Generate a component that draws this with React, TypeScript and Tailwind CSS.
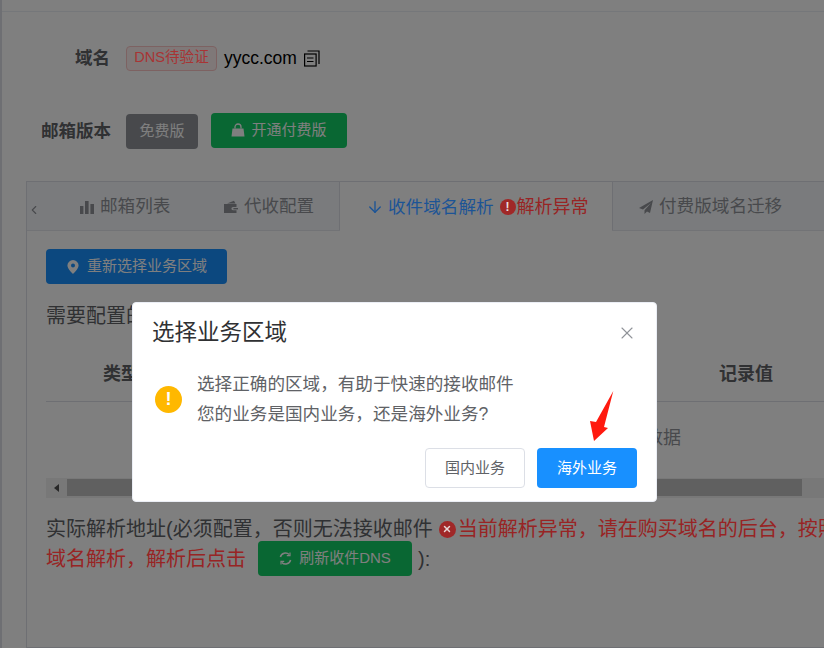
import React from "react";
import { X, ArrowDown, ChevronLeft } from "lucide-react";

const F = "[font-family:'Liberation_Sans','Noto_Sans_CJK_SC',sans-serif]";

function CopyIcon() {
  return (
    <svg width="16" height="17" viewBox="0 0 16 17" fill="none" stroke="currentColor" strokeWidth="1.2" className="ml-[7px]">
      <path d="M3.5 1 H15 V14" />
      <rect x="0.6" y="4" width="11.5" height="12" />
      <path d="M3 8 H9.5 M3 11.5 H9.5" />
    </svg>
  );
}
function Bag() {
  return (
    <svg width="14" height="14" viewBox="0 0 14 14" fill="currentColor">
      <path d="M1.5 5.5 H12.5 L13.5 13.5 H0.5 Z" />
      <path d="M4 5.5 V4 A3 3 0 0 1 10 4 V5.5" fill="none" stroke="currentColor" strokeWidth="1.3" />
    </svg>
  );
}
function Bars() {
  return (
    <svg width="14" height="14" viewBox="0 0 14 14" fill="currentColor" className="mr-[6px]">
      <rect x="0" y="6" width="3.4" height="8" />
      <rect x="5" y="1" width="3.6" height="13" />
      <rect x="10.4" y="4" width="3.6" height="10" />
    </svg>
  );
}
function WalletIcon() {
  return (
    <svg width="14" height="14" viewBox="0 0 14 14" className="mr-[6px]">
      <path fill="currentColor" d="M3 3.5 L10 0.8 L11.5 3.5 Z" />
      <path fill="currentColor" fillRule="evenodd" d="M0 4 H12.5 V7 H9 A1.6 1.6 0 0 0 9 10.2 H12.5 V13 H0 Z" />
      <rect x="9.4" y="8" width="4.6" height="1.4" fill="currentColor" />
    </svg>
  );
}
function Plane() {
  return (
    <svg width="14" height="14" viewBox="0 0 14 14" fill="currentColor" className="mr-[6px]">
      <path d="M14 0 L0 8 L4 9.5 L12 3 L5.5 10.2 L5.5 14 L8 11.4 L11 13 Z" />
    </svg>
  );
}
function Pin() {
  return (
    <svg width="12" height="14" viewBox="0 0 12 14">
      <path fill="currentColor" fillRule="evenodd" d="M6 0 A5.6 5.6 0 0 1 11.6 5.6 C11.6 9 6 14 6 14 C6 14 0.4 9 0.4 5.6 A5.6 5.6 0 0 1 6 0 Z M6 3.6 A2 2 0 1 0 6 7.6 A2 2 0 1 0 6 3.6 Z" />
    </svg>
  );
}
function Refresh() {
  return (
    <svg width="13" height="13" viewBox="0 0 13 13" fill="none" stroke="currentColor" strokeWidth="1.5">
      <path d="M1.4 5 A5.2 5.2 0 0 1 10.2 2.6" />
      <path d="M11.6 8 A5.2 5.2 0 0 1 2.8 10.4" />
      <path d="M7.8 3.6 H11 V0.6" strokeWidth="1.2" />
      <path d="M5.2 9.4 H2 V12.4" strokeWidth="1.2" />
    </svg>
  );
}

function Page() {
  return (
    <div className="w-[824px] h-[648px] bg-white border-l-2 border-[#dcdfe6] flex flex-col overflow-hidden">
      <div className="h-[12px] shrink-0 border-b border-[#ebeef5] bg-white" />
      <div className="flex items-center h-[30px] mt-[31px] pl-[73px]">
        <span className="font-bold text-[#606266] text-[17.5px] w-[51px]">域名</span>
        <span className="h-[25px] w-[91px] rounded border border-[#fbc4c4] bg-[#fef0f0] text-[14.6px] flex items-center justify-center">
          <span className="relative z-20 text-[#a83434]">DNS待验证</span>
        </span>
        <span className="ml-[7px] text-[17.5px] text-black">yycc.com</span>
        <span className="text-black"><CopyIcon /></span>
      </div>
      <div className="flex items-center h-[36px] mt-[40px] pl-[39px]">
        <span className="font-bold text-[#606266] text-[17.5px] w-[85px]">邮箱版本</span>
        <span className="w-[72px] h-[35px] rounded bg-[#909399] text-white text-[15px] flex items-center justify-center">免费版</span>
        <span className="ml-[13px] -mt-[2px] w-[136px] h-[35px] rounded bg-[#13ce66] text-white text-[15px] flex items-center justify-center gap-[6px]">
          <Bag />开通付费版
        </span>
      </div>
      <div className="ml-[24px] mt-[32px] w-[900px] flex-1 border border-[#dcdfe6] flex flex-col">
        <div className="h-[49px] shrink-0 flex text-[18px] text-[#909399] bg-[#f5f7fa] border-b border-[#e4e7ed]">
          <div className="w-[14px] flex items-center justify-center"><ChevronLeft size={16} strokeWidth={1.9} className="mt-[7px]" /></div>
          <div className="w-[299px] pt-[1px] border-r border-[#dcdfe6] flex items-center pl-[39px]">
            <Bars />
            <span className="w-[124px] text-[17.6px]">邮箱列表</span>
            <WalletIcon />
            <span className="text-[17.5px]">代收配置</span>
          </div>
          <div className="w-[272px] h-[49px] pt-[1px] bg-white flex items-center pl-[26px]">
            <span className="relative z-20 flex items-center text-[#1c5496]">
              <ArrowDown size={18} strokeWidth={1.8} className="mr-[4px]" />
              <span className="text-[17.6px]">收件域名解析</span>
            </span>
            <span className="relative z-20 ml-[6px] w-[16px] h-[16px] rounded-full bg-[#a02828] text-[#e8e0e0] text-[12px] font-bold flex items-center justify-center">!</span>
            <span className="relative z-20 ml-[1px] text-[#982424]">解析异常</span>
          </div>
          <div className="flex-1 pt-[1px] border-l border-[#dcdfe6] flex items-center pl-[26px]">
            <Plane />
            <span className="text-[17.6px]">付费版域名迁移</span>
          </div>
        </div>
        <div className="pl-[19px] flex flex-col">
          <div className="mt-[18px] w-[181px] h-[35px] pl-[21px] rounded bg-[#1890ff] text-white text-[15px] flex items-center gap-[8px]">
            <Pin />重新选择业务区域
          </div>
          <div className="mt-[18px] text-[20px] leading-[28px] text-[#606266]">需要配置的解析记录</div>
          <div className="mt-[17px] h-[55px] w-[850px] flex items-center border-b border-[#dcdfe6] font-bold text-[18px] text-[#606266]">
            <span className="ml-[57px]">类型</span>
            <span className="ml-[580px]">记录值</span>
          </div>
          <div className="h-[76px] pb-[4px] w-[850px] flex items-center text-[18px] text-[#909399]"><span className="ml-[563px]">暂无数据</span></div>
          <div className="w-[800px] h-[20px] bg-[#f1f1f1] flex items-start pt-[1px]">
            <div className="w-[21px] h-[17px] flex items-center justify-center">
              <svg width="5" height="8" viewBox="0 0 5 8" className="text-[#505050]"><path d="M5 0 V8 L0 4 Z" fill="currentColor" /></svg>
            </div>
            <div className="w-[735px] h-[17px] bg-[#c1c1c1]" />
          </div>
          <div className="mt-[17px] h-[28px] flex items-center text-[20px] text-[#606266] whitespace-nowrap">
            实际解析地址(必须配置，否则无法接收邮件
            <span className="relative z-20 ml-[6px] w-[17px] h-[17px] rounded-full bg-[#a02828] text-[#e8d8d8] flex items-center justify-center shrink-0"><X size={10} strokeWidth={3.5} /></span>
            <span className="relative z-20 ml-[2px] text-[#982424]">当前解析异常，请在购买域名的后台，按照下表配置</span>
          </div>
          <div className="-mt-[2px] h-[35px] flex items-center text-[20px] whitespace-nowrap">
            <span className="relative z-20 text-[#982424]">域名解析，解析后点击</span>
            <span className="ml-[12px] w-[154px] h-[35px] rounded bg-[#13ce66] text-white text-[15px] flex items-center justify-center gap-[7px]"><Refresh />刷新收件DNS</span>
            <span className="ml-[6px] text-[#606266]">):</span>
          </div>
        </div>
      </div>
    </div>
  );
}

function Dialog() {
  return (
    <div className="absolute z-30 left-[132px] top-[302px] w-[525px] h-[200px] bg-white rounded border border-[#ebeef5] flex flex-col">
      <div className="h-[60px] shrink-0 flex items-center justify-between pl-[19px] pr-[19px]">
        <span className="text-[22.5px] text-[#303133]">选择业务区域</span>
        <X size={20} strokeWidth={1.3} className="text-[#909399]" />
      </div>
      <div className="flex items-center pt-[6px] pl-[22px] gap-[15px]">
        <div className="w-[27px] h-[27px] rounded-full bg-[#ffb800] text-white font-bold text-[18px] flex items-center justify-center">!</div>
        <div className="text-[17.6px] leading-[30px] text-[#606266]">
          <div>选择正确的区域，有助于快速的接收邮件</div>
          <div>您的业务是国内业务，还是海外业务?</div>
        </div>
      </div>
      <div className="mt-auto pb-[13px] pr-[19px] flex justify-end gap-[12px]">
        <span className="w-[100px] h-[40px] rounded border border-[#dcdfe6] text-[#606266] text-[15px] flex items-center justify-center">国内业务</span>
        <span className="w-[100px] h-[40px] rounded bg-[#1890ff] text-white text-[15px] flex items-center justify-center">海外业务</span>
      </div>
    </div>
  );
}

export default function App() {
  return (
    <div className={`relative w-[824px] h-[648px] overflow-hidden ${F}`}>
      <Page />
      <div className="absolute inset-0 z-10 bg-black/50" />
      <Dialog />
      <svg className="absolute z-40 left-[585px] top-[388px]" width="32" height="56" viewBox="585 388 32 56">
        <polygon points="613.3,391 604,427 608,428 594,441 590,421 596,422" fill="#ff1a0f" />
      </svg>
    </div>
  );
}
